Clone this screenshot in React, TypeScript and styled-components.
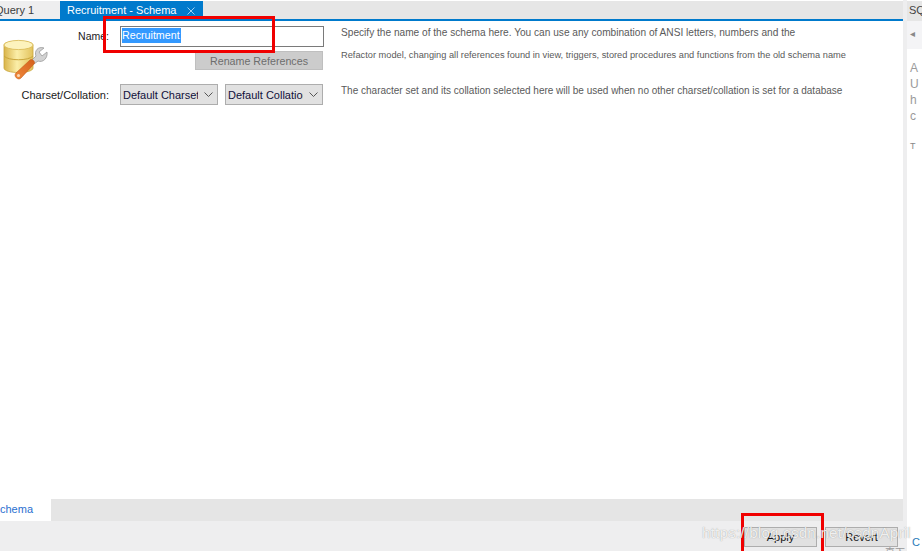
import React from "react";
import styled, { createGlobalStyle } from "styled-components";

const GlobalStyle = createGlobalStyle`
  html, body { margin: 0; padding: 0; background: #fff; }
  body { font-family: "Liberation Sans", Arial, sans-serif; font-size: 11px; color: #1e1e1e; }
`;

const Page = styled.div`
  position: relative;
  width: 922px;
  height: 551px;
  display: flex;
  overflow: hidden;
`;

const Main = styled.div`
  width: 903px;
  display: flex;
  flex-direction: column;
`;

const TabBar = styled.div`
  margin-top: 1px;
  background: #e6e6e6;
  border-bottom: 2px solid #007acc;
  display: flex;
  flex: none;
  height: 18px;
`;

const Tab = styled.div<{ $active?: boolean }>`
  width: ${(p) => (p.$active ? "143px" : "60px")};
  background: ${(p) => (p.$active ? "#007acc" : "#eeeeef")};
  color: ${(p) => (p.$active ? "#fff" : "#3c3c3c")};
  font-size: 11px;
  line-height: 18px;
  display: flex;
  overflow: hidden;
  white-space: nowrap;
  padding-left: ${(p) => (p.$active ? "7px" : "0")};
  box-sizing: border-box;
  align-items: center;
`;

const ClippedTitle = styled.span`
  margin-left: -5px;
`;

const CloseMark = styled.svg`
  width: 8px;
  height: 8px;
  margin-left: 11px;
  margin-top: 2px;
  stroke: #9fd0ee;
  stroke-width: 1;
`;

const Content = styled.div`
  flex: 1;
  background: #fff;
`;

const Form = styled.div`
  display: grid;
  grid-template-columns: 109px 204px 1fr;
  grid-template-rows: 21px 37px 21px;
  column-gap: 11px;
  padding-top: 5px;
`;

const SchemaIcon = styled.svg`
  grid-area: 1 / 1 / 3 / 2;
  width: 46px;
  height: 42px;
  margin: 13px 0 0 3px;
`;

const Label = styled.label<{ $row: number }>`
  grid-area: ${(p) => p.$row} / 1;
  justify-self: end;
  align-self: center;
  color: #1a1a1a;
  white-space: nowrap;
  font-size: ${(p) => (p.$row === 1 ? "10.5px" : "11px")};
  margin-bottom: ${(p) => (p.$row === 1 ? "2px" : "0")};
`;

const NameBox = styled.div`
  grid-area: 1 / 2;
  border: 1px solid #7a7a7a;
  box-sizing: border-box;
  padding: 1px 0 0 1px;
  display: flex;
  align-items: flex-start;
`;

const Selected = styled.span`
  background: #3399ff;
  color: #fff;
  font-size: 10.7px;
  line-height: 15px;
  padding: 0 1px 0 0;
`;

const RenameButton = styled.button`
  grid-area: 2 / 2;
  justify-self: end;
  align-self: start;
  width: 128px;
  margin: 4px 1px 0 0;
  height: 19px;
  padding: 0;
  background: #cccccc;
  border: 1px solid #bfbfbf;
  color: #6d6d6d;
  font: 10.7px "Liberation Sans", Arial, sans-serif;
`;

const SelectRow = styled.div`
  grid-area: 3 / 2;
  display: flex;
  gap: 7px;
`;

const Select = styled.div`
  width: 98px;
  height: 21px;
  box-sizing: border-box;
  background: #e1e1e1;
  border: 1px solid #adadad;
  display: flex;
  align-items: center;
  padding: 0 4px 0 2px;
  color: #10103a;
  font-size: 11px;
`;

const SelectText = styled.span`
  width: 75px;
  overflow: hidden;
  white-space: nowrap;
`;

const Chevron = styled.svg`
  width: 9px;
  height: 6px;
  margin-left: auto;
  fill: none;
  stroke: #555;
  stroke-width: 1;
`;

const Hint = styled.div<{ $row: number; $size: number; $nudge: number }>`
  grid-area: ${(p) => p.$row} / 3;
  color: #5a5a5a;
  font-size: ${(p) => p.$size}px;
  line-height: 12px;
  white-space: nowrap;
  margin: ${(p) => p.$nudge}px 0 0 6px;
`;

const SubTabs = styled.div`
  height: 22px;
  background: #e5e5e5;
  display: flex;
  flex: none;
`;

const SubTab = styled.div`
  width: 51px;
  background: #fff;
  color: #2a6fd0;
  font-size: 11px;
  line-height: 20px;
  overflow: hidden;
`;

const Footer = styled.div`
  height: 30px;
  flex: none;
  background: #eeeeef;
  display: flex;
  justify-content: flex-end;
  align-items: flex-start;
  gap: 8px;
  padding: 6px 5px 0 0;
  box-sizing: border-box;
`;

const FooterButton = styled.button`
  width: 73px;
  height: 20px;
  padding: 0;
  background: #e1e1e1;
  border: 1px solid #adadad;
  color: #111;
  font: 11px "Liberation Sans", Arial, sans-serif;
`;

const Gutter = styled.div`
  width: 4px;
  background: #eeeeef;
  flex: none;
`;

const Side = styled.div`
  flex: 1;
  overflow: hidden;
  display: flex;
  flex-direction: column;
`;

const SideHead = styled.div`
  margin-top: 1px;
  height: 20px;
  background: #e6e6e6;
  padding-left: 2px;
  font-size: 11px;
  line-height: 18px;
  color: #444;
  white-space: nowrap;
`;

const SideTool = styled.div`
  height: 28px;
  background: #f4f4f6;
  color: #888;
  font-size: 10px;
  line-height: 26px;
  padding-left: 3px;
`;

const SideText = styled.div`
  padding: 11px 0 0 3px;
  color: #9a9a9a;
  font-size: 12px;
  line-height: 16px;
  white-space: nowrap;
`;

const SideNote = styled.div`
  margin-top: 17px;
  padding-left: 3px;
  color: #888;
  font-size: 9px;
`;

const SideLink = styled.div`
  margin-top: auto;
  padding: 0 0 3px 5px;
  color: #2a7ab8;
  font-size: 11px;
`;

const RedBox = styled.div<{ $l: number; $t: number; $w: number; $h: number }>`
  position: absolute;
  left: ${(p) => p.$l}px;
  top: ${(p) => p.$t}px;
  width: ${(p) => p.$w}px;
  height: ${(p) => p.$h}px;
  box-sizing: border-box;
  border: 3px solid #f00000;
`;

const Watermark = styled.div`
  position: absolute;
  left: 702px;
  top: 524px;
  color: rgba(255, 255, 255, 0.85);
  text-shadow: 0 0 1px rgba(110, 110, 110, 0.7);
  font-size: 15.2px;
  line-height: 17px;
  letter-spacing: 0.2px;
  white-space: nowrap;
`;

const Stray = styled.div`
  position: absolute;
  left: 885px;
  top: 544px;
  color: #999;
  font: 10px "Noto Sans CJK SC", sans-serif;
`;

export default function App() {
  return (
    <Page>
      <GlobalStyle />
      <Main>
        <TabBar>
          <Tab>
            <ClippedTitle>Query 1</ClippedTitle>
          </Tab>
          <Tab $active>
            Recruitment - Schema
            <CloseMark viewBox="0 0 8 8">
              <path d="M0.5 0.5L7.5 7.5M7.5 0.5L0.5 7.5" />
            </CloseMark>
          </Tab>
        </TabBar>
        <Content>
          <Form>
            <SchemaIcon viewBox="0 0 46 42">
              <defs>
                <linearGradient id="db" x1="0" x2="1" y1="0" y2="0">
                  <stop offset="0" stopColor="#d9b44a" />
                  <stop offset="0.45" stopColor="#fbeea8" />
                  <stop offset="1" stopColor="#e2c25c" />
                </linearGradient>
                <linearGradient id="handle" x1="0" x2="1" y1="1" y2="0">
                  <stop offset="0" stopColor="#f08a3c" />
                  <stop offset="1" stopColor="#d4601c" />
                </linearGradient>
              </defs>
              <path
                d="M1 6C1 1 30 1 30 6V29C30 35 1 35 1 29Z"
                fill="url(#db)"
                stroke="#c9a53a"
                strokeWidth="0.8"
              />
              <ellipse cx="15.5" cy="6" rx="14.5" ry="4.6" fill="#fdf3bd" stroke="#d8b850" strokeWidth="0.8" />
              <path d="M1 17C5 22 26 22 30 17" fill="none" stroke="#c9a53a" strokeWidth="1" />
              <path
                d="M29 21L33 17C31 12 35 7 41 9L36 13L39 17L44 13C45 19 40 24 35 22L31 25Z"
                fill="#d2d2d2"
                stroke="#9a9a9a"
                strokeWidth="0.8"
              />
              <path
                d="M13 34L27 21C29 19 33 23 31 25L18 39C15 42 10 37 13 34Z"
                fill="url(#handle)"
                stroke="#c55a18"
                strokeWidth="0.6"
              />
              <circle cx="15.5" cy="36.5" r="1.5" fill="#fbd9b8" />
            </SchemaIcon>
            <Label $row={1}>Name:</Label>
            <NameBox>
              <Selected>Recruitment</Selected>
            </NameBox>
            <RenameButton>Rename References</RenameButton>
            <Label $row={3}>Charset/Collation:</Label>
            <SelectRow>
              <Select>
                <SelectText>Default Charset</SelectText>
                <Chevron viewBox="0 0 9 6">
                  <path d="M0.5 0.5L4.5 4.5L8.5 0.5" />
                </Chevron>
              </Select>
              <Select>
                <SelectText>Default Collation</SelectText>
                <Chevron viewBox="0 0 9 6">
                  <path d="M0.5 0.5L4.5 4.5L8.5 0.5" />
                </Chevron>
              </Select>
            </SelectRow>
            <Hint $row={1} $size={10.15} $nudge={1}>
              Specify the name of the schema here. You can use any combination of ANSI letters, numbers and the
            </Hint>
            <Hint $row={2} $size={9.25} $nudge={2}>
              Refactor model, changing all references found in view, triggers, stored procedures and functions from the old schema name
            </Hint>
            <Hint $row={3} $size={10} $nudge={1}>
              The character set and its collation selected here will be used when no other charset/collation is set for a database
            </Hint>
          </Form>
        </Content>
        <SubTabs>
          <SubTab>chema</SubTab>
        </SubTabs>
        <Footer>
          <FooterButton>Apply</FooterButton>
          <FooterButton>Revert</FooterButton>
        </Footer>
      </Main>
      <Gutter />
      <Side>
        <SideHead>SQL</SideHead>
        <SideTool>◂</SideTool>
        <SideText>
          A<br />U<br />h<br />c
        </SideText>
        <SideNote>T</SideNote>
        <SideLink>C</SideLink>
      </Side>
      <RedBox $l={103} $t={16} $w={172} $h={37} />
      <RedBox $l={741} $t={513} $w={83} $h={41} />
      <Watermark>https://blog.csdn.net/csdnApril</Watermark>
      <Stray>直下</Stray>
    </Page>
  );
}
